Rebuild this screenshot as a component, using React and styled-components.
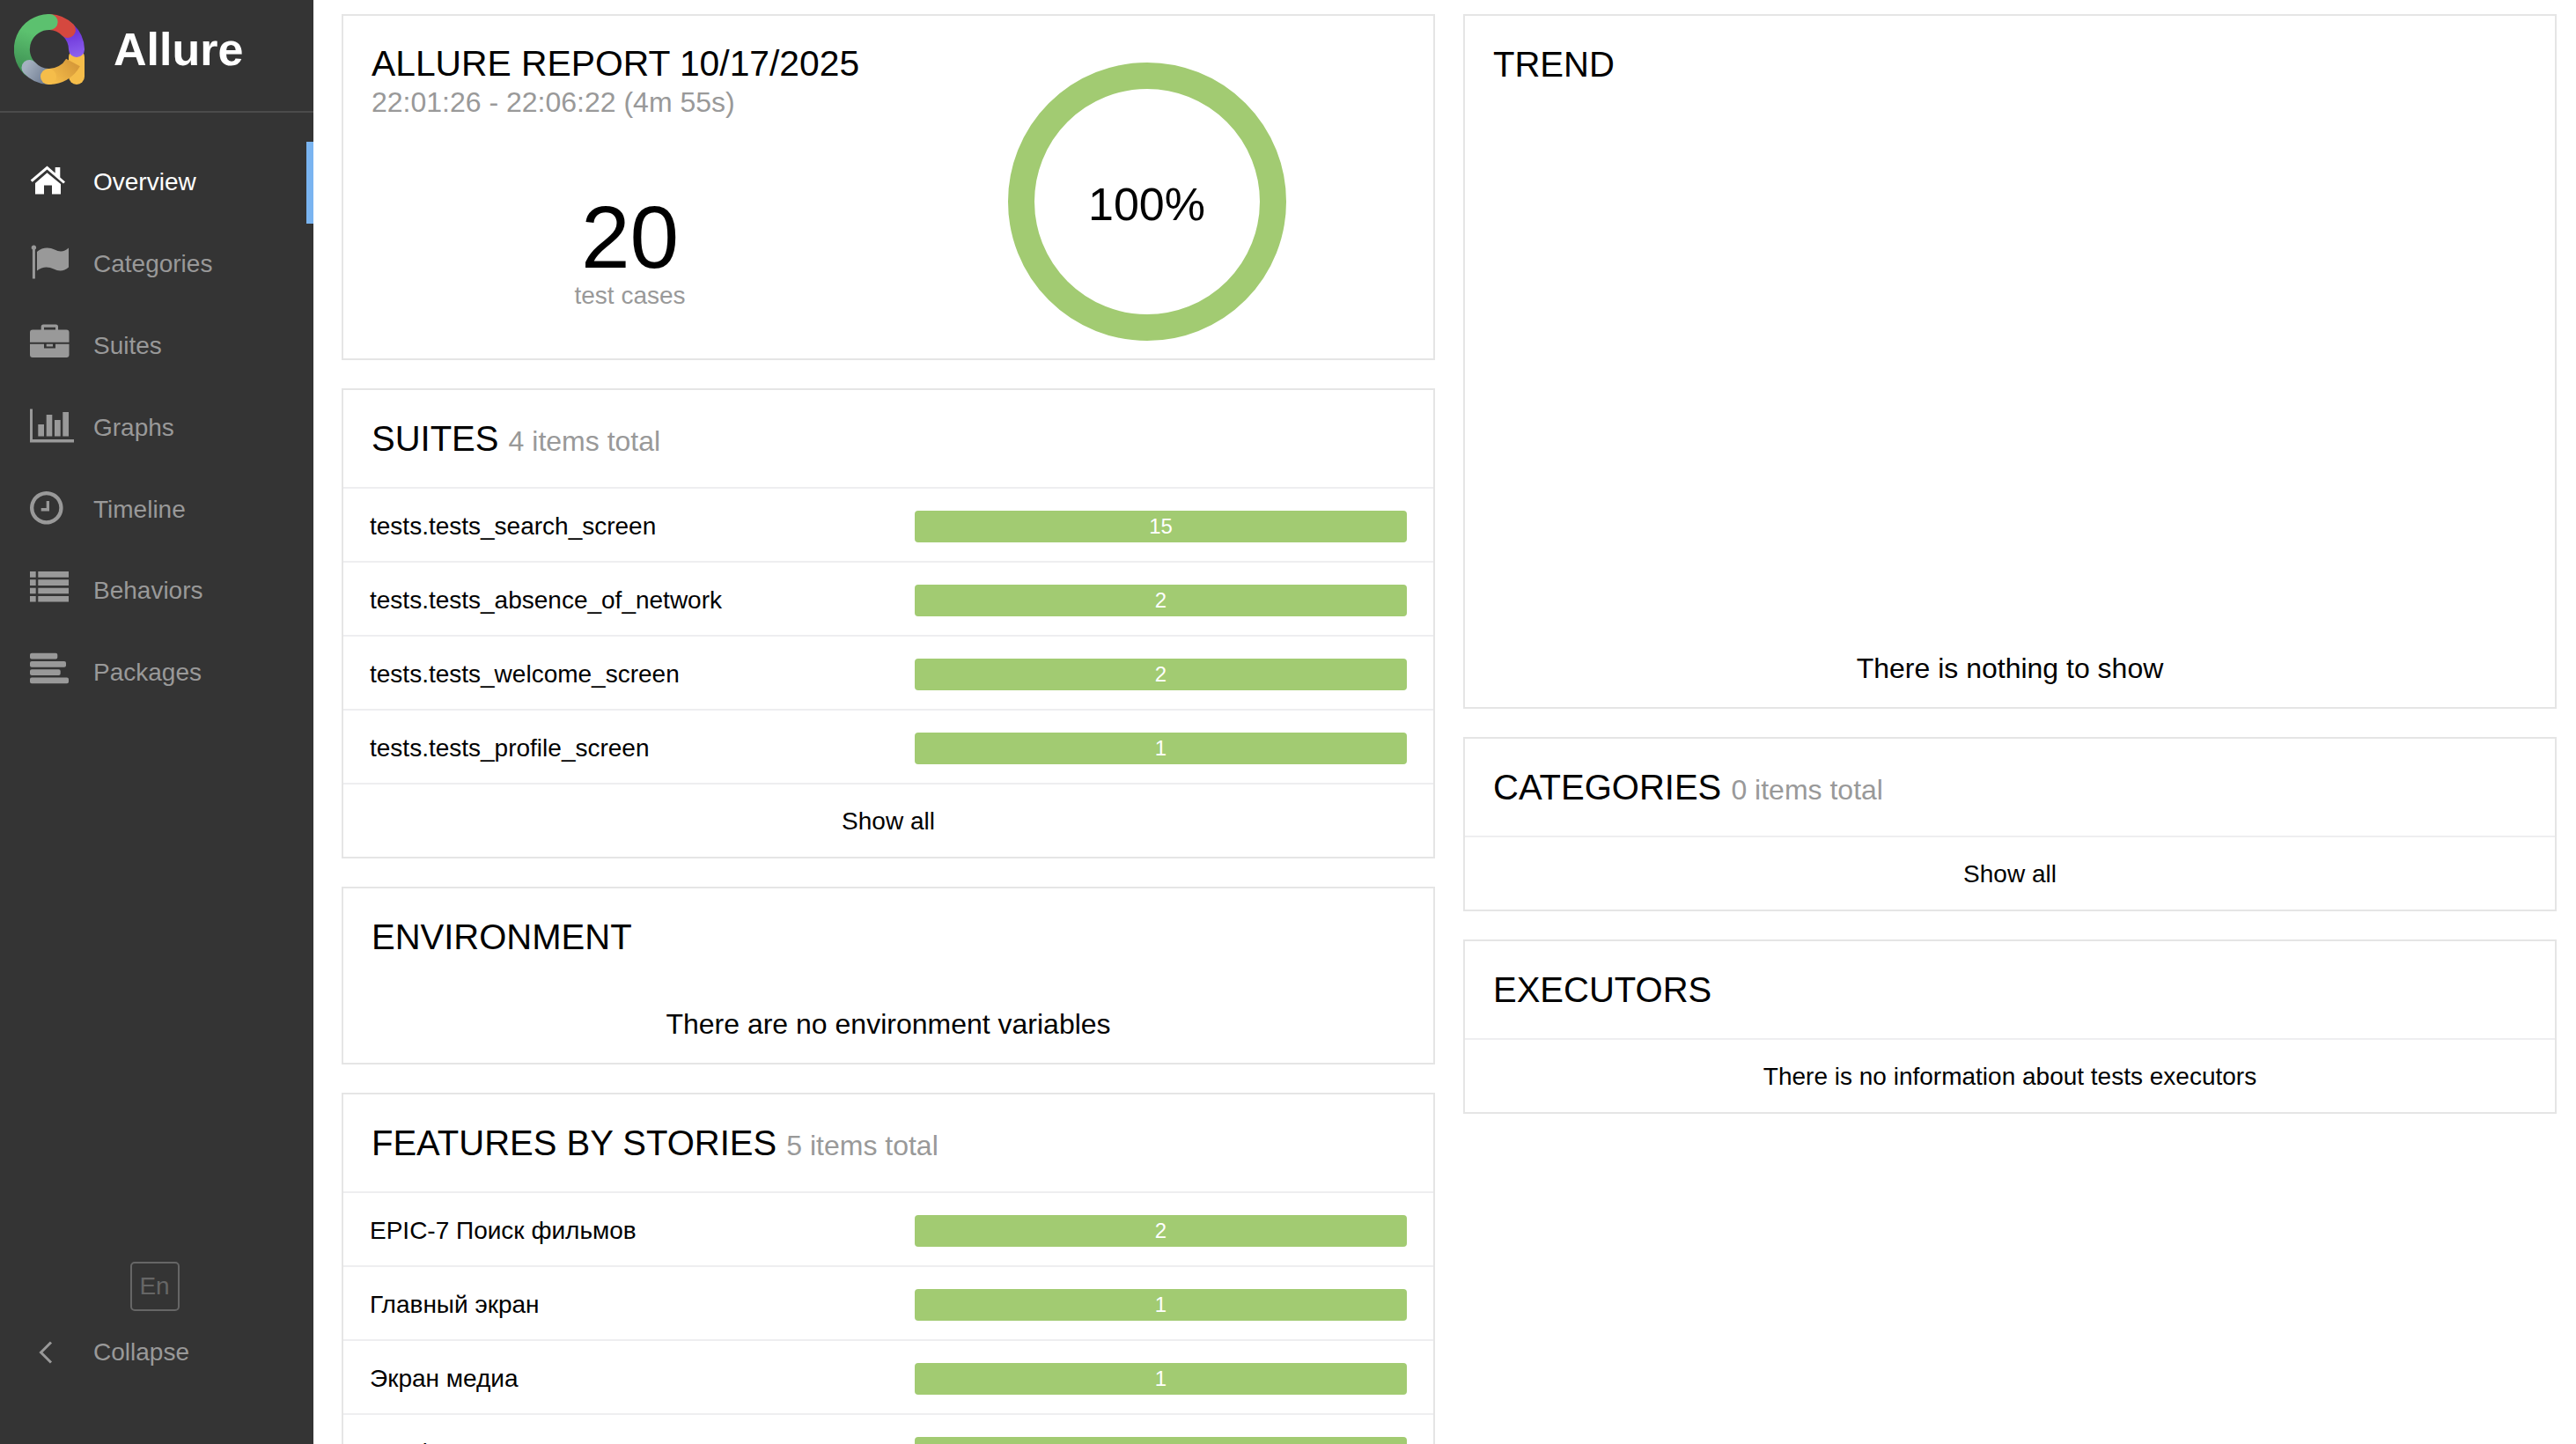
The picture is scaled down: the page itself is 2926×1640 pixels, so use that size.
import React from 'react'
import styled, { createGlobalStyle } from 'styled-components'

const GlobalStyle = createGlobalStyle`
  html, body {
    margin: 0;
    height: 100%;
    overflow: hidden;
    background: #fff;
    font-family: 'Liberation Sans', Arial, sans-serif;
  }
  #root { height: 100%; }
`

const Page = styled.div`
  display: flex;
  height: 1640px;
  overflow: hidden;
`

const Sidebar = styled.aside`
  width: 356px;
  flex: none;
  display: flex;
  flex-direction: column;
  background: #343434;
`

const Brand = styled.div`
  height: 128px;
  box-sizing: border-box;
  border-bottom: 2px solid #4b4b4b;
  display: flex;
  align-items: center;
  padding: 0 0 14px 16px;
  color: #fff;
  font-size: 52px;
  font-weight: 700;
  gap: 33px;
`

const Logo = styled.svg`
  width: 80px;
  height: 80px;
`

const Nav = styled.nav`
  flex: 1;
  padding-top: 33px;
`

const NavItem = styled.div`
  height: 92.8px;
  display: flex;
  align-items: center;
  padding-left: 34px;
  font-size: 28px;
  color: ${p => (p.$active ? '#fff' : '#999')};
  box-shadow: ${p => (p.$active ? 'inset -8px 0 0 #7ab4f0' : 'none')};
`

const NavIcon = styled.svg`
  width: 50px;
  height: 40px;
  margin-right: 22px;
  flex: none;
  fill: currentColor;
  overflow: visible;
`

const Footer = styled.div`
  display: flex;
  flex-direction: column;
  padding-bottom: 79px;
`

const LangButton = styled.div`
  align-self: center;
  width: 56px;
  height: 56px;
  margin: 0 0 22px -5px;
  box-sizing: border-box;
  border: 2px solid #666;
  border-radius: 5px;
  display: flex;
  align-items: center;
  justify-content: center;
  color: #666;
  font-size: 28px;
`

const CollapseRow = styled.div`
  display: flex;
  align-items: center;
  height: 50px;
  padding-left: 34px;
  color: #999;
  font-size: 28px;
`

const Content = styled.main`
  flex: 1;
  display: grid;
  grid-template-columns: 1242px 1242px;
  column-gap: 32px;
  padding: 16px 0 0 32px;
  align-items: start;
`

const Column = styled.div`
  display: flex;
  flex-direction: column;
  gap: 32px;
`

const Card = styled.section`
  border: 2px solid #e5e5e5;
  box-sizing: border-box;
  background: #fff;
`

const TopCard = styled(Card)`
  height: 393px;
  display: grid;
  grid-template-columns: 1fr 1fr;
  padding: 29px 32px 27px;
`

const Heading = styled.h2`
  margin: 0;
  font-size: 40px;
  font-weight: 400;
  line-height: 52px;
  color: #000;
`

const ReportHeading = styled(Heading)`
  font-size: 40.8px;
  line-height: 51px;
`

const Muted = styled.span`
  color: #999;
  font-size: 32px;
`

const SubTitle = styled.div`
  color: #999;
  font-size: 32px;
  line-height: 36px;
`

const Stat = styled.div`
  margin-top: 85px;
  text-align: center;
`

const StatValue = styled.div`
  font-size: 100px;
  line-height: 100px;
  color: #000;
`

const StatLabel = styled.div`
  font-size: 28px;
  line-height: 34px;
  color: #999;
`

const GaugeWrap = styled.div`
  position: relative;
  justify-self: center;
  width: 316px;
  height: 316px;
  margin-top: 24px;
`

const GaugeText = styled.div`
  position: absolute;
  inset: 5px 0 0;
  display: flex;
  align-items: center;
  justify-content: center;
  font-size: 52px;
  color: #000;
`

const CardHeader = styled.div`
  padding: 29px 32px 27px;
  height: 110px;
  box-sizing: border-box;
`

const Row = styled.div`
  height: 84px;
  box-sizing: border-box;
  border-top: 2px solid #eeeef0;
  display: flex;
  align-items: center;
  padding: 4px 30px 0 30px;
  font-size: 28px;
  color: #000;
`

const RowName = styled.div`
  flex: 1;
`

const Bar = styled.div`
  width: 559px;
  height: 36px;
  border-radius: 4px;
  background: #a2cb72;
  color: #fff;
  font-size: 24px;
  line-height: 36px;
  text-align: center;
`

const CenterRow = styled.div`
  height: 84px;
  box-sizing: border-box;
  border-top: 2px solid #eeeef0;
  padding-top: 2px;
  display: flex;
  align-items: center;
  justify-content: center;
  font-size: 28px;
  color: #000;
`

const Notice = styled.div`
  text-align: center;
  font-size: 32px;
  line-height: 40px;
  color: #000;
  padding-bottom: 24px;
`

const EnvNotice = styled(Notice)`
  margin-top: 24px;
  padding-bottom: 24px;
`

const TrendCard = styled(Card)`
  height: 789px;
  display: flex;
  flex-direction: column;
  justify-content: space-between;
`

const suites = [
  ['tests.tests_search_screen', 15],
  ['tests.tests_absence_of_network', 2],
  ['tests.tests_welcome_screen', 2],
  ['tests.tests_profile_screen', 1],
]

const features = [
  ['EPIC-7 Поиск фильмов', 2],
  ['Главный экран', 1],
  ['Экран медиа', 1],
  ['Профиль', 1],
]

const navItems = [
  ['Overview', <path d="M.7 17.5 L19.5 1.5 L28.7 9.5 V3 H34.3 V14.5 L40 19.5 L38 21.5 L19.5 5.5 L2.7 19.7 Z M6 21 L19.5 9.3 L35 22 V33.5 H25 V23.5 H16 V33.5 H6 Z" />],
  ['Categories', <path d="M4.4 -1.5 a2.7 2.7 0 0 1 1.5 5 V36.5 H2.9 V3.5 a2.7 2.7 0 0 1 1.5 -5 Z M8 6 C14 .5 22 .5 28 3.5 C34 6.5 39 6 44 1.5 V23.5 C39 28 33 28.5 27 25.5 C21 22.5 14 22.5 8 27.5 Z" />],
  ['Suites', <path fillRule="evenodd" d="M3 1.5 H12.7 V-2 a2.5 2.5 0 0 1 2.5 -2.5 H29.5 a2.5 2.5 0 0 1 2.5 2.5 V1.5 H41.5 a3 3 0 0 1 3 3 V15.8 H0 V4.5 a3 3 0 0 1 3 -3 Z M16 -1.2 V1.5 H29 V-1.2 Z M0 17.8 H16 V22.5 H29 V17.8 H44.5 V30 a3 3 0 0 1 -3 3 H3 a3 3 0 0 1 -3 -3 Z M18.7 17.8 H26 V20.5 H18.7 Z" />],
  ['Graphs', <path d="M0 -1.5 H3 V33 H50 V36.5 H0 Z M9.3 16 H16 V29.5 H9.3 Z M18.7 5 H25.3 V29.5 H18.7 Z M28 11 H34.7 V29.5 H28 Z M37.3 2 H44 V29.5 H37.3 Z" />],
  ['Timeline', <path fillRule="evenodd" d="M18.8 -1 a18.8 18.8 0 1 0 .01 0 Z M18.8 3.3 a14.5 14.5 0 1 1 -.01 0 Z M18.7 10 H22 V21.5 H12.7 V18 H18.7 Z" />],
  ['Behaviors', <path d="M0 -2 H6.7 V4.7 H0 Z M9.3 -2 H44 V4.7 H9.3 Z M0 7.3 H6.7 V14 H0 Z M9.3 7.3 H44 V14 H9.3 Z M0 16.7 H6.7 V23.3 H0 Z M9.3 16.7 H44 V23.3 H9.3 Z M0 26 H6.7 V32.5 H0 Z M9.3 26 H44 V32.5 H9.3 Z" />],
  ['Packages', <path d="M2 -2.2 H29.3 a2 2 0 0 1 2 2 V2.5 a2 2 0 0 1 -2 2 H2 a2 2 0 0 1 -2 -2 V-.2 a2 2 0 0 1 2 -2 Z M2 7 H39 a2 2 0 0 1 2 2 V11.7 a2 2 0 0 1 -2 2 H2 a2 2 0 0 1 -2 -2 V9 a2 2 0 0 1 2 -2 Z M2 16.3 H32.7 a2 2 0 0 1 2 2 V21 a2 2 0 0 1 -2 2 H2 a2 2 0 0 1 -2 -2 V18.3 a2 2 0 0 1 2 -2 Z M2 25.5 H42 a2 2 0 0 1 2 2 V30.2 a2 2 0 0 1 -2 2 H2 a2 2 0 0 1 -2 -2 V27.5 a2 2 0 0 1 2 -2 Z" />],
]

function AllureLogo() {
  return (
    <Logo viewBox="0 0 80 80">
      <defs>
        <linearGradient id="logoGreen" gradientUnits="userSpaceOnUse" x1="30" y1="25" x2="15" y2="68">
          <stop offset="0" stopColor="#5cc16f" />
          <stop offset="1" stopColor="#3d8f52" />
        </linearGradient>
        <linearGradient id="logoGrey" gradientUnits="userSpaceOnUse" x1="14" y1="58" x2="42" y2="76">
          <stop offset="0" stopColor="#a5b1c0" />
          <stop offset="1" stopColor="#66738a" />
        </linearGradient>
        <linearGradient id="logoPurple" gradientUnits="userSpaceOnUse" x1="62" y1="18" x2="70" y2="48">
          <stop offset="0" stopColor="#6a2fd6" />
          <stop offset="1" stopColor="#8b60ee" />
        </linearGradient>
        <linearGradient id="logoYellow" gradientUnits="userSpaceOnUse" x1="40" y1="72" x2="64" y2="52">
          <stop offset="0" stopColor="#f5bd4a" />
          <stop offset="1" stopColor="#d79a3a" />
        </linearGradient>
      </defs>
      <g fill="none" strokeWidth="18" strokeLinecap="round">
        <path d="M71 49 V71" stroke="#f5bd4a" />
        <path d="M61 18 A31 31 0 0 1 71 40" stroke="url(#logoPurple)" />
        <path d="M40.6 9 A31 31 0 0 1 61 18" stroke="#d5483f" />
        <path d="M18 62 A31 31 0 0 1 40.6 9" stroke="url(#logoGreen)" />
        <path d="M17.5 61 A31 31 0 0 0 39 71" stroke="url(#logoGrey)" />
        <path d="M39 71 A31 31 0 0 0 67 55" stroke="url(#logoYellow)" strokeLinecap="butt" />
        <circle cx="39" cy="71" r="9" fill="#f5bd4a" stroke="none" />
      </g>
    </Logo>
  )
}

function App() {
  return (
    <Page>
      <GlobalStyle />
      <Sidebar>
        <Brand>
          <AllureLogo />
          <span>Allure</span>
        </Brand>
        <Nav>
          {navItems.map(([label, icon], i) => (
            <NavItem key={label} $active={i === 0}>
              <NavIcon viewBox="0 0 50 40">{icon}</NavIcon>
              {label}
            </NavItem>
          ))}
        </Nav>
        <Footer>
          <LangButton>En</LangButton>
          <CollapseRow>
            <NavIcon viewBox="0 0 50 40">
              <path d="M24 8.5 L12.5 20 L24 31.5" fill="none" stroke="currentColor" strokeWidth="3" />
            </NavIcon>
            Collapse
          </CollapseRow>
        </Footer>
      </Sidebar>
      <Content>
        <Column>
          <TopCard>
            <div>
              <ReportHeading>ALLURE REPORT 10/17/2025</ReportHeading>
              <SubTitle>22:01:26 - 22:06:22 (4m 55s)</SubTitle>
              <Stat>
                <StatValue>20</StatValue>
                <StatLabel>test cases</StatLabel>
              </Stat>
            </div>
            <GaugeWrap>
              <svg width="316" height="316" viewBox="0 0 316 316">
                <circle cx="158" cy="158" r="143" fill="none" stroke="#a2cb72" strokeWidth="30" />
              </svg>
              <GaugeText>100%</GaugeText>
            </GaugeWrap>
          </TopCard>
          <Card>
            <CardHeader>
              <Heading>SUITES <Muted>4 items total</Muted></Heading>
            </CardHeader>
            {suites.map(([name, n]) => (
              <Row key={name}><RowName>{name}</RowName><Bar>{n}</Bar></Row>
            ))}
            <CenterRow>Show all</CenterRow>
          </Card>
          <Card>
            <CardHeader>
              <Heading>ENVIRONMENT</Heading>
            </CardHeader>
            <EnvNotice>There are no environment variables</EnvNotice>
          </Card>
          <Card>
            <CardHeader>
              <Heading>FEATURES BY STORIES <Muted>5 items total</Muted></Heading>
            </CardHeader>
            {features.map(([name, n]) => (
              <Row key={name}><RowName>{name}</RowName><Bar>{n}</Bar></Row>
            ))}
          </Card>
        </Column>
        <Column>
          <TrendCard>
            <CardHeader>
              <Heading>TREND</Heading>
            </CardHeader>
            <Notice>There is nothing to show</Notice>
          </TrendCard>
          <Card>
            <CardHeader>
              <Heading>CATEGORIES <Muted>0 items total</Muted></Heading>
            </CardHeader>
            <CenterRow>Show all</CenterRow>
          </Card>
          <Card>
            <CardHeader>
              <Heading>EXECUTORS</Heading>
            </CardHeader>
            <CenterRow>There is no information about tests executors</CenterRow>
          </Card>
        </Column>
      </Content>
    </Page>
  )
}

export default App
